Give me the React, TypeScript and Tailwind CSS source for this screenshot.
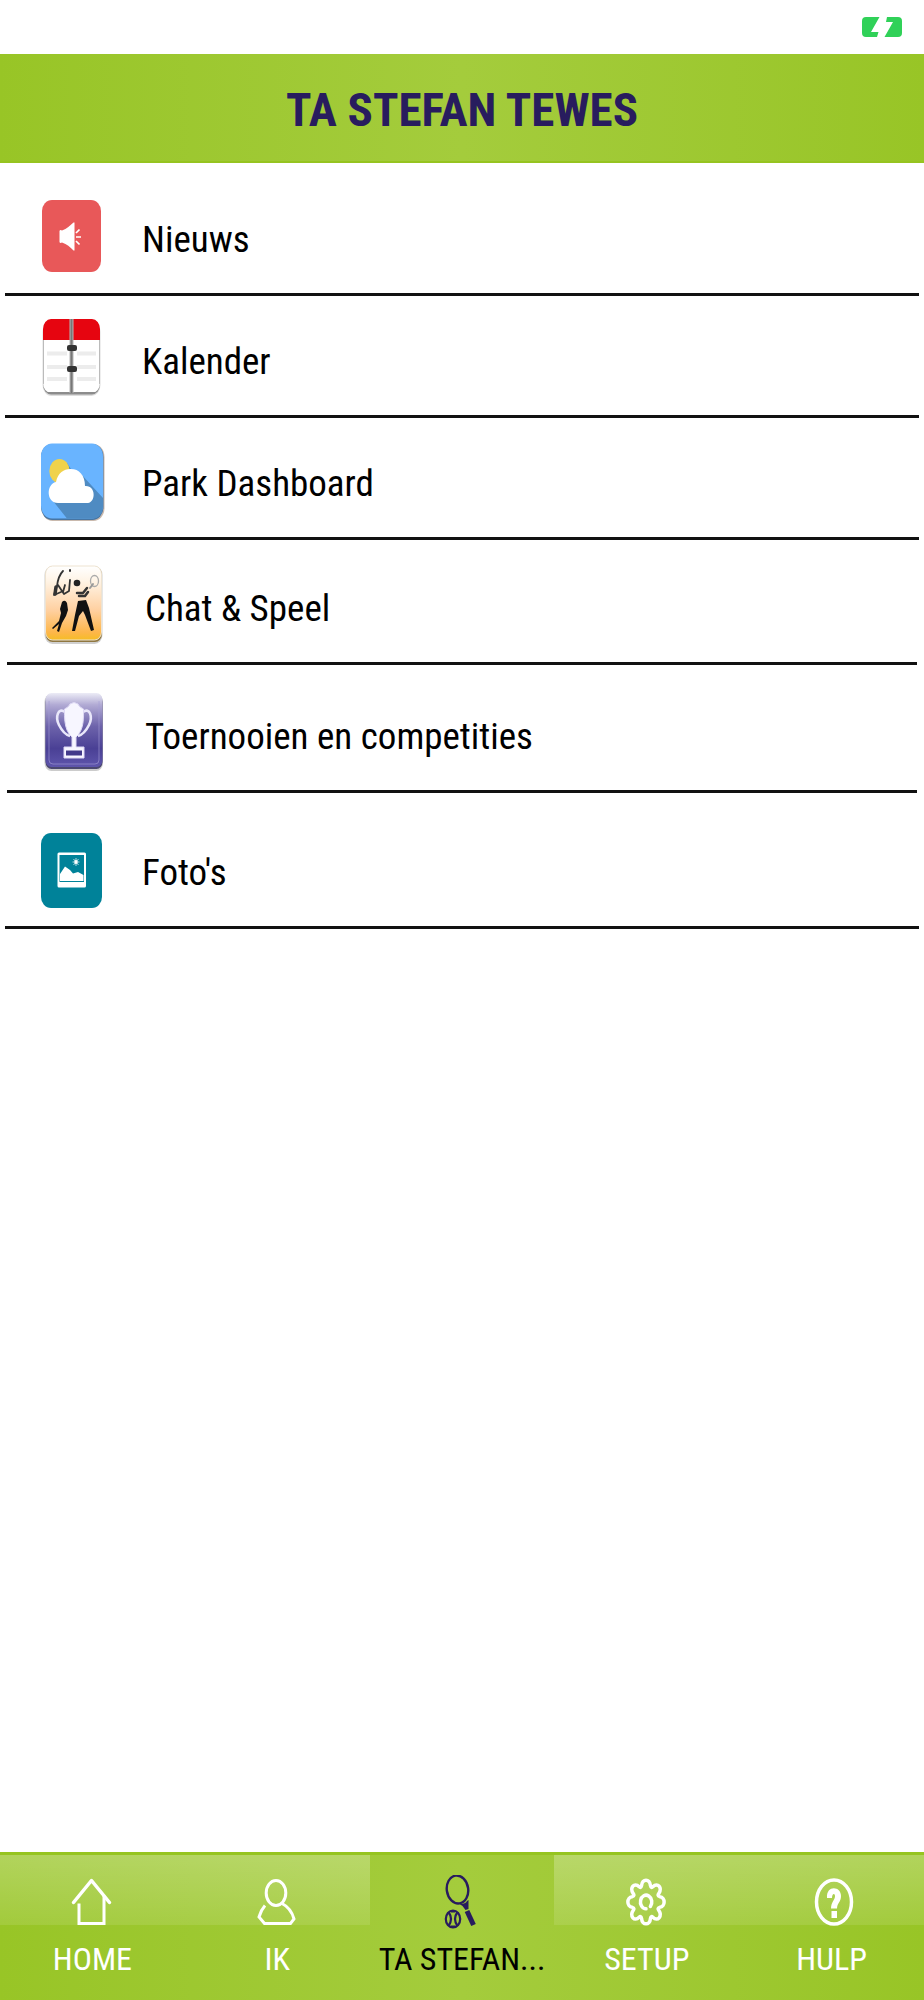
import type { ReactNode } from "react";

function NewsIcon() {
  return (
    <svg viewBox="0 0 72 88" className="h-[88px] w-[72px] shrink-0" aria-hidden="true">
      <rect x="6" y="8" width="59" height="72" rx="10" ry="11" fill="#e85859" />
      <path d="M23.500 39 Q24 37.500 26 38.500 C31 37 34 33.500 37.500 30.500 H38.500 V58.500 H37.500 C34 55 31 52 26 50.500 Q24 51.500 23.500 50 Z" fill="#fff" />
      <path d="M40 41 L43.500 37.500 M40 45 H45 M40 49 L43.500 52.500" stroke="#fff" strokeWidth="1.700" fill="none" />
    </svg>
  );
}

function CalendarIcon() {
  return (
    <svg viewBox="0 0 72 88" className="h-[88px] w-[72px] shrink-0" aria-hidden="true">
      <defs>
        <linearGradient id="calGap" x1="0" x2="1" y1="0" y2="0">
          <stop offset="0" stopColor="#b5b5b5" />
          <stop offset="0.500" stopColor="#777" />
          <stop offset="1" stopColor="#b5b5b5" />
        </linearGradient>
        <clipPath id="calClip"><rect x="7" y="5" width="57" height="74" rx="8" ry="10" /></clipPath>
      </defs>
      <rect x="6.500" y="7" width="58" height="75" rx="9" ry="11" fill="#ddd" />
      <rect x="7" y="6" width="57" height="74.500" rx="8" ry="10" fill="#8c8c8c" />
      <g clipPath="url(#calClip)">
        <rect x="7" y="5" width="57" height="73" fill="#fff" />
        <rect x="7" y="5" width="57" height="21" fill="#e60510" />
        <path d="M7.500 26 V70 M63.500 26 V70" stroke="#bbb" />
        <path d="M11 39.500 H31 M41 39.500 H60 M11 53 H31 M41 53 H60 M11 65 H31 M41 65 H60" stroke="#ececec" strokeWidth="4" />
        <rect x="33.500" y="5" width="4" height="75" fill="url(#calGap)" />
      </g>
      <rect x="31" y="31" width="10" height="6" rx="2" fill="#333" />
      <rect x="31" y="52" width="10" height="6" rx="2" fill="#333" />
    </svg>
  );
}

function WeatherIcon() {
  return (
    <svg viewBox="0 0 72 88" className="h-[88px] w-[72px] shrink-0" aria-hidden="true">
      <defs>
        <clipPath id="weatherClip"><rect x="5" y="8" width="62" height="75" rx="11" ry="13" /></clipPath>
      </defs>
      <rect x="5.500" y="8" width="63" height="77" rx="11" ry="13" fill="#c9b9ad" />
      <rect x="5" y="8" width="62.500" height="76" rx="11" ry="13" fill="#4775a3" />
      <rect x="5" y="7.500" width="62" height="75" rx="11" ry="13" fill="#69b4ff" />
      <g clipPath="url(#weatherClip)">
        <path d="M31 27 L35 33 L45 38 L67 62 V82.500 H31 L17 65 Z" fill="#4f8bc2" />
      </g>
      <ellipse cx="23.500" cy="35" rx="10.200" ry="12" fill="#f0d24b" />
      <path d="M22 67 C10 67 10 48 20 46 C22 36 29 32.500 35 33 C43 33 49 39 49 50 C60 49 60 66 52 67 Z" fill="#fff" />
    </svg>
  );
}

function PlayersIcon() {
  return (
    <svg viewBox="0 0 72 88" className="h-[88px] w-[72px] shrink-0" aria-hidden="true">
      <defs>
        <linearGradient id="playersBg" x1="0" x2="0" y1="0" y2="1">
          <stop offset="0" stopColor="#fff" />
          <stop offset="0.200" stopColor="#fff4e6" />
          <stop offset="0.600" stopColor="#ffd0a0" />
          <stop offset="0.900" stopColor="#fdb649" />
          <stop offset="1" stopColor="#f5bd25" />
        </linearGradient>
      </defs>
      <rect x="8.500" y="5" width="58" height="78" rx="8" ry="9" fill="#d0d0d0" />
      <rect x="9.500" y="6" width="56.500" height="75" rx="7" ry="8" fill="#8f7740" />
      <rect x="9.500" y="5" width="56" height="74" rx="7" ry="8" fill="url(#playersBg)" stroke="#eee3d0" />
      <g fill="none" stroke="#333" strokeLinecap="round" strokeLinejoin="round">
        <path d="M21 25 C22 17 25 12 27 10 M21 25 L18 34 L25 31 M22 24 L26 30 L28 33 L33 30 L34 19 M29 24 L27 31" strokeWidth="1.800" />
        <path d="M20 26 L19 33" strokeWidth="3.500" />
        <path d="M34 9 V10" strokeWidth="2" />
        <path d="M41 32 H47 L51 27 M43 35 L49 35 L52 31" strokeWidth="2.500" />
        <ellipse cx="58.500" cy="20" rx="4" ry="5.500" stroke="#aaa" strokeWidth="1.300" />
        <path d="M54 27 L57 23" stroke="#999" strokeWidth="2" />
      </g>
      <circle cx="41" cy="22" r="3.300" fill="#222" />
      <g fill="#111">
        <path d="M26 41 Q29 38 31 42 L32 49 L30 55 L26 62 L23 71 L21 70 L23 63 L17 68 L16 67 L23 60 L25 52 L24 48 Z" />
        <path d="M42 40 L50 39 L53 47 L58 69 L55 70 L49 54 L47 50 L43 55 L39 70 L36 70 L39 54 Z" />
      </g>
    </svg>
  );
}

function TrophyIcon() {
  return (
    <svg viewBox="0 0 72 88" className="h-[88px] w-[72px] shrink-0" aria-hidden="true">
      <defs>
        <linearGradient id="trophyBg" x1="0" x2="0" y1="0" y2="1">
          <stop offset="0" stopColor="#ececf6" />
          <stop offset="0.160" stopColor="#b1aad4" />
          <stop offset="0.450" stopColor="#6d63ab" />
          <stop offset="0.750" stopColor="#4a4095" />
          <stop offset="1" stopColor="#5e55ac" />
        </linearGradient>
      </defs>
      <rect x="8.500" y="5" width="58.500" height="77" rx="7" ry="8" fill="#ccc" />
      <rect x="9.500" y="6" width="57" height="74" rx="6" ry="7" fill="#4b4870" />
      <rect x="9.500" y="4" width="57" height="74" rx="6" ry="7" fill="url(#trophyBg)" />
      <path d="M13 12 V71 Q13 75 17 75 H59 Q63 75 63 71 V12" fill="none" stroke="#a59fd6" strokeOpacity="0.600" />
      <g fill="none" stroke="#e9e7fa" strokeWidth="2.600">
        <path d="M29 23 C22 18 19 28 23 36 C26 42 30 46 34 47" />
        <path d="M47 23 C54 18 57 28 53 36 C50 42 46 46 42 47" />
      </g>
      <path d="M28.500 20 Q33 18 34 15 Q38 12 42 15 Q43 18 47.500 20 Q48 35 45 41 Q43 46 40 48 V58 H48 V69 H28 V58 H36 V48 Q33 46 31 41 Q28 34 28.500 20 Z" fill="#f7f6ff" stroke="#ded9f5" />
      <rect x="30" y="61.500" width="16" height="5" fill="#42398a" />
    </svg>
  );
}

function PhotoIcon() {
  return (
    <svg viewBox="0 0 72 88" className="h-[88px] w-[72px] shrink-0" aria-hidden="true">
      <rect x="5" y="8" width="61" height="75" rx="10" ry="11" fill="#008299" />
      <path fillRule="evenodd" d="M23 27.500 H48.500 Q50 27.500 50 29 V61 Q50 62.500 48.500 62.500 H23 Q21.500 62.500 21.500 61 V29 Q21.500 27.500 23 27.500 Z M23.500 30 V57 H48 V30 Z" fill="#fff" />
      <path d="M24 56 V49 L29 41.500 L34 45 L37 48.500 L42 47 L47.500 50 V56 Z" fill="#fff" />
      <path d="M40 33 V41 M36.500 37 H43.500 M37.500 34 L42.500 40 M42.500 34 L37.500 40" stroke="#fff" strokeWidth="0.700" />
      <ellipse cx="40" cy="37" rx="1.700" ry="2" fill="#fff" />
    </svg>
  );
}

function HomeIcon() {
  return (
    <svg viewBox="0 0 48 56" className="h-14 w-12" fill="none" stroke="currentColor" strokeWidth="3.500" strokeLinecap="round" strokeLinejoin="round" aria-hidden="true">
      <path d="M5.500 27.500 L23.500 5.500 L41.500 27.500" />
      <path d="M11 30 V48.500 H36 V22" strokeWidth="3" strokeLinecap="square" strokeLinejoin="miter" />
    </svg>
  );
}

function PersonIcon() {
  return (
    <svg viewBox="0 0 48 56" className="h-14 w-12" fill="none" stroke="currentColor" strokeWidth="3" aria-hidden="true">
      <ellipse cx="23" cy="18" rx="9.800" ry="12.500" />
      <path d="M29 28.500 Q38 33 41 44 L37.500 48.500 H11.500 L6 42 Q8 35 12 30.500" />
    </svg>
  );
}

function RacketIcon() {
  return (
    <svg viewBox="0 0 48 56" className="h-14 w-12" fill="none" stroke="currentColor" aria-hidden="true">
      <ellipse cx="19.500" cy="14.500" rx="10.700" ry="14" strokeWidth="2.400" transform="rotate(-8 19.500 14.500)" />
      <path d="M20 28 Q27 30 29 26 L30.500 25 L30.500 34 L27.500 35 L24.500 31 Z" fill="currentColor" stroke="none" />
      <path d="M29 36 L35.500 50" strokeWidth="5" />
      <ellipse cx="15" cy="44" rx="7.200" ry="8.500" strokeWidth="2.200" />
      <path d="M10.500 37 Q15.500 44 10.500 51 M19.500 37 Q14.500 44 19.500 51" strokeWidth="2.200" />
      <path d="M13 36.500 H17 M13 51.500 H17" strokeWidth="2.200" />
    </svg>
  );
}

function GearIcon() {
  return (
    <svg viewBox="0 0 48 56" className="h-14 w-12" fill="none" stroke="currentColor" strokeWidth="3.500" strokeLinejoin="round" strokeLinecap="round" aria-hidden="true">
      <g transform="translate(23 27) scale(0.980 1.180)">
        <path vectorEffect="non-scaling-stroke" d="M-4.500 -14 C-4 -20 4 -20 4.500 -14 C5 -12 6 -12 7 -13 C12 -17 17 -12 13 -7 C12 -6 12 -5 14 -4.500 C20 -4 20 4 14 4.500 C12 5 12 6 13 7 C17 12 12 17 7 13 C6 12 5 12 4.500 14 C4 20 -4 20 -4.500 14 C-5 12 -6 12 -7 13 C-12 17 -17 12 -13 7 C-12 6 -12 5 -14 4.500 C-20 4 -20 -4 -14 -4.500 C-12 -5 -12 -6 -13 -7 C-17 -12 -12 -17 -7 -13 C-6 -12 -5 -12 -4.500 -14 Z" />
        <path vectorEffect="non-scaling-stroke" d="M0 5.800 A5.800 5.800 0 1 1 4.500 3.800" />
      </g>
    </svg>
  );
}

function HelpIcon() {
  return (
    <svg viewBox="0 0 48 56" className="h-14 w-12" aria-hidden="true">
      <ellipse cx="26" cy="27" rx="17.500" ry="22" fill="none" stroke="currentColor" strokeWidth="3.500" />
      <path d="M19 23 C18 10 33 11 33 21 C33 27 29 28 29 33.500 H23 C23 27 27 25 27 21 C27 18 24 18 24 23 Z M23.500 36 H29 V43 H23.500 Z" fill="currentColor" />
    </svg>
  );
}

type Item = { label: string; icon: ReactNode; size: string; inset: string; text: string };

const items: Item[] = [
  { label: "Nieuws", icon: <NewsIcon />, size: "h-[133px]", inset: "mx-[5px] pl-[31px]", text: "ml-[34px]" },
  { label: "Kalender", icon: <CalendarIcon />, size: "h-[122px]", inset: "mx-[5px] pl-[31px]", text: "ml-[34px]" },
  { label: "Park Dashboard", icon: <WeatherIcon />, size: "h-[122px]", inset: "mx-[5px] pl-[31px]", text: "ml-[34px]" },
  { label: "Chat & Speel", icon: <PlayersIcon />, size: "h-[125px]", inset: "mx-[7px] pl-[29px]", text: "ml-[37px]" },
  { label: "Toernooien en competities", icon: <TrophyIcon />, size: "h-[128px]", inset: "mx-[7px] pl-[29px]", text: "ml-[37px]" },
  { label: "Foto's", icon: <PhotoIcon />, size: "h-[136px]", inset: "mx-[5px] pl-[31px]", text: "ml-[34px]" },
];

const tabs = [
  { label: "HOME", icon: <HomeIcon /> },
  { label: "IK", icon: <PersonIcon /> },
  { label: "TA STEFAN...", icon: <RacketIcon />, active: true },
  { label: "SETUP", icon: <GearIcon /> },
  { label: "HULP", icon: <HelpIcon /> },
];

export default function App() {
  return (
    <div className="flex min-h-screen flex-col bg-white font-['Roboto_Condensed',Roboto,sans-serif] text-black">
      <div className="flex h-[54px] items-center justify-end pr-[22px]">
        <svg viewBox="0 0 40 20" className="h-5 w-10" role="img" aria-label="Battery charging">
          <path d="M4 0 H17.500 L9 15 H16.500 L15 20 H4 Q0 20 0 16 V4 Q0 0 4 0 Z" fill="#30d158" />
          <path d="M25 0 H36 Q40 0 40 4 V16 Q40 20 36 20 H22.500 L31 5 H24 Z" fill="#30d158" />
        </svg>
      </div>
      <header className="flex h-[109px] items-center justify-center border-b-2 border-[#96c420] bg-linear-to-r from-[#98c526] via-[#a4cc3c] to-[#98c526] pt-1">
        <h1 className="text-[47px] leading-[56px] font-bold text-[#281c5e]">TA STEFAN TEWES</h1>
      </header>
      <main className="flex-1">
        <ul>
          {items.map((item) => (
            <li key={item.label}>
              <a href="#" className={`flex items-end border-b-[3px] border-[#111] ${item.size} ${item.inset}`}>
                <span className="mb-[13px]">{item.icon}</span>
                <span className={`mb-[31px] text-[37px] leading-[44px] ${item.text}`}>{item.label}</span>
              </a>
            </li>
          ))}
        </ul>
      </main>
      <nav className="grid h-[148px] grid-cols-5 border-t-[3px] border-[#96c420] bg-linear-to-r from-[#98c526] via-[#a4cc3c] to-[#98c526]">
        {tabs.map((tab) => (
          <a
            key={tab.label}
            href="#"
            aria-current={tab.active ? "page" : undefined}
            className={
              tab.active
                ? "flex flex-col items-center pt-5 text-[#281c5e]"
                : "flex flex-col items-center bg-linear-to-b from-white/25 to-white/10 bg-[length:100%_70px] bg-no-repeat pt-5 text-white"
            }
          >
            {tab.icon}
            <span className={tab.active ? "mt-[10px] text-[32px] leading-9 text-black" : "mt-[10px] text-[32px] leading-9"}>
              {tab.label}
            </span>
          </a>
        ))}
      </nav>
    </div>
  );
}
